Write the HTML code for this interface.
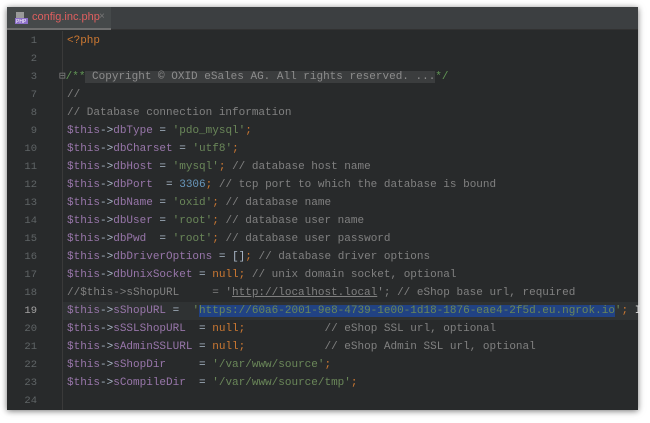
<!DOCTYPE html>
<html><head><meta charset="utf-8"><style>
html,body{margin:0;padding:0;width:650px;height:423px;background:#fff;overflow:hidden}
.win{position:absolute;left:7px;top:7px;width:631px;height:403px;background:#282a2b;box-shadow:0 1px 6px rgba(0,0,0,.55)}
.tabs{position:absolute;left:0;top:0;width:631px;height:22px;background:#3c3f41;border-bottom:1px solid #323232}
.tab{position:absolute;left:0;top:0;width:104px;height:23px;background:#45494a;border-bottom:2px solid #6e6e6e;box-sizing:border-box}
.tab .t{position:absolute;left:25px;top:4px;font:11px "Liberation Sans",sans-serif;color:#e05f5f}
.tab .x{position:absolute;left:92px;top:4px;font:10px "Liberation Sans",sans-serif;color:#777}
.ico{position:absolute;left:8px;top:5px;width:13px;height:12px}
.gut{position:absolute;left:0;top:24px;width:55px;height:379px;background:#282a2b;border-right:1px solid #3a3a3a}
.row{position:absolute;left:0;height:18px;width:631px;font:11px/18px "Liberation Mono",monospace;white-space:pre}
.num{position:absolute;left:0;width:30px;text-align:right;color:#5f6466;font-size:10.5px}
.code{position:absolute;left:60px;color:#a9b7c6}
.v{color:#9876aa}.k{color:#cc7832}.s{color:#6a8759}.c{color:#808080}.n{color:#6897bb}.g{color:#629755}
.fold{background:#3b3d3e;color:#8c8c8c}
.sel{background:#214283}
.cur{background:#2f3233}
u{text-decoration:underline}
</style></head><body>
<div class="win">
 <div class="tabs"><div class="tab">
  <svg class="ico" viewBox="0 0 13 12"><rect x="1" y="0" width="8" height="7" fill="#9a9a9a"/><rect x="0" y="6" width="13" height="6" fill="#8c6fc8"/><text x="1" y="11" font-size="5" fill="#fff" font-family="Liberation Sans">PHP</text></svg>
  <span class="t">config.inc.php</span><span class="x">×</span></div></div>
 <div class="gut"></div>
</div>
<div style="position:absolute;left:7px;top:1px">
<div class="row" style="top:31px"><span class="num">1</span><span class="code"><span class="k">&lt;?php</span></span></div>
<div class="row" style="top:49px"><span class="num">2</span></div>
<div class="row" style="top:67px"><span class="num">3</span><span class="code" style="left:52px"><span class="c">⊟</span><span class="g">/**</span><span class="fold"> Copyright © OXID eSales AG. All rights reserved. ...</span><span class="g">*/</span></span></div>
<div class="row" style="top:85px"><span class="num">7</span><span class="code c">//</span></div>
<div class="row" style="top:103px"><span class="num">8</span><span class="code c">// Database connection information</span></div>
<div class="row" style="top:121px"><span class="num">9</span><span class="code"><span class="v">$this</span>-&gt;<span class="v">dbType</span> = <span class="s">'pdo_mysql'</span><span class="k">;</span></span></div>
<div class="row" style="top:139px"><span class="num">10</span><span class="code"><span class="v">$this</span>-&gt;<span class="v">dbCharset</span> = <span class="s">'utf8'</span><span class="k">;</span></span></div>
<div class="row" style="top:157px"><span class="num">11</span><span class="code"><span class="v">$this</span>-&gt;<span class="v">dbHost</span> = <span class="s">'mysql'</span><span class="k">;</span> <span class="c">// database host name</span></span></div>
<div class="row" style="top:175px"><span class="num">12</span><span class="code"><span class="v">$this</span>-&gt;<span class="v">dbPort</span>  = <span class="n">3306</span><span class="k">;</span> <span class="c">// tcp port to which the database is bound</span></span></div>
<div class="row" style="top:193px"><span class="num">13</span><span class="code"><span class="v">$this</span>-&gt;<span class="v">dbName</span> = <span class="s">'oxid'</span><span class="k">;</span> <span class="c">// database name</span></span></div>
<div class="row" style="top:211px"><span class="num">14</span><span class="code"><span class="v">$this</span>-&gt;<span class="v">dbUser</span> = <span class="s">'root'</span><span class="k">;</span> <span class="c">// database user name</span></span></div>
<div class="row" style="top:229px"><span class="num">15</span><span class="code"><span class="v">$this</span>-&gt;<span class="v">dbPwd</span>  = <span class="s">'root'</span><span class="k">;</span> <span class="c">// database user password</span></span></div>
<div class="row" style="top:247px"><span class="num">16</span><span class="code"><span class="v">$this</span>-&gt;<span class="v">dbDriverOptions</span> = []<span class="k">;</span> <span class="c">// database driver options</span></span></div>
<div class="row" style="top:265px"><span class="num">17</span><span class="code"><span class="v">$this</span>-&gt;<span class="v">dbUnixSocket</span> = <span class="k">null;</span> <span class="c">// unix domain socket, optional</span></span></div>
<div class="row" style="top:283px"><span class="num">18</span><span class="code c">//$this-&gt;sShopURL     = '<u>http://localhost.local</u>'; // eShop base url, required</span></div>
<div class="row cur" style="top:301px;left:56px;width:575px"></div>
<div class="row" style="top:301px"><span class="num" style="color:#a4a3a3">19</span><span class="code"><span class="v">$this</span>-&gt;<span class="v">sShopURL</span> =  <span class="s">'</span><span class="sel s">https://60a6-2001-9e8-4739-1e00-1d18-1876-eae4-2f5d.eu.ngrok.io</span><span class="s">'</span><span class="k">;</span> <span style="color:#ddd">I</span></span></div>
<div class="row" style="top:319px"><span class="num">20</span><span class="code"><span class="v">$this</span>-&gt;<span class="v">sSSLShopURL</span>  = <span class="k">null;</span>            <span class="c">// eShop SSL url, optional</span></span></div>
<div class="row" style="top:337px"><span class="num">21</span><span class="code"><span class="v">$this</span>-&gt;<span class="v">sAdminSSLURL</span> = <span class="k">null;</span>            <span class="c">// eShop Admin SSL url, optional</span></span></div>
<div class="row" style="top:355px"><span class="num">22</span><span class="code"><span class="v">$this</span>-&gt;<span class="v">sShopDir</span>     = <span class="s">'/var/www/source'</span><span class="k">;</span></span></div>
<div class="row" style="top:373px"><span class="num">23</span><span class="code"><span class="v">$this</span>-&gt;<span class="v">sCompileDir</span>  = <span class="s">'/var/www/source/tmp'</span><span class="k">;</span></span></div>
<div class="row" style="top:391px"><span class="num">24</span></div>
</div>
</body></html>
